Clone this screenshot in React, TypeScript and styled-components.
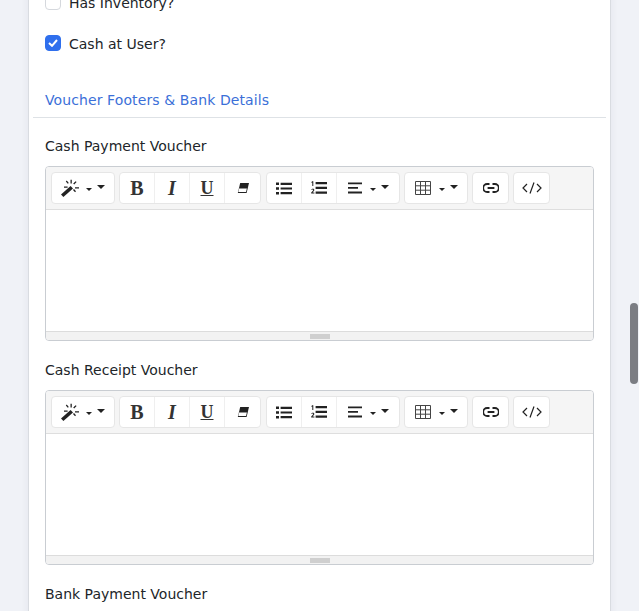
import React from "react";
import styled, { createGlobalStyle } from "styled-components";

const GlobalStyle = createGlobalStyle`
  html, body {
    margin: 0;
    padding: 0;
    height: 100%;
    overflow: hidden;
    background: #f0f2f7;
  }
  body {
    font-family: "DejaVu Sans", "Noto Sans", sans-serif;
    color: #212529;
  }
`;

const Page = styled.div`
  position: relative;
  width: 639px;
  height: 611px;
  overflow: hidden;
  padding-left: 28px;
  box-sizing: border-box;
`;

const Card = styled.div`
  width: 583px;
  height: 700px;
  box-sizing: border-box;
  margin-top: -10px;
  background: #fff;
  border-left: 1px solid #d9dce1;
  border-right: 1px solid #d9dce1;
  box-shadow: 0 0 8px rgba(30, 40, 70, 0.06);
  padding: 0 4px;
`;

const Fields = styled.div`
  padding: 0 12px;
`;

const CheckRow = styled.label<{ $gap?: number }>`
  display: flex;
  align-items: center;
  gap: 8px;
  height: 24px;
  margin-bottom: ${(p) => p.$gap ?? 0}px;
  font-size: 14px;
`;

const CheckText = styled.span`
  padding-top: 2px;
`;

const Box = styled.span<{ $checked?: boolean }>`
  display: flex;
  align-items: center;
  justify-content: center;
  box-sizing: border-box;
  width: 16px;
  height: 16px;
  border-radius: 4px;
  border: 1px solid ${(p) => (p.$checked ? "#2f6fed" : "#d5d8dd")};
  background: ${(p) => (p.$checked ? "#2f6fed" : "#fff")};
`;

const SectionTitle = styled.div`
  color: #3b6fd8;
  font-size: 14px;
  line-height: 20px;
  letter-spacing: 0.1px;
  padding: 35px 12px 7px;
  border-bottom: 1px solid #dee2e6;
`;

const FieldLabel = styled.div`
  font-size: 14px;
  line-height: 20px;
  margin-top: 19px;
  margin-bottom: 10px;

  &:first-child {
    margin-top: 18px;
  }
`;

const Editor = styled.div`
  box-sizing: border-box;
  width: 549px;
  height: 175px;
  border: 1px solid #c9cdd2;
  border-radius: 4px;
  display: flex;
  flex-direction: column;
  overflow: hidden;
`;

const Toolbar = styled.div`
  display: flex;
  flex: none;
  align-items: flex-start;
  height: 43px;
  box-sizing: border-box;
  padding: 5px 0 0 5px;
  gap: 4px;
  background: #f5f5f5;
  border-bottom: 1px solid #dedede;
`;

const ButtonGroup = styled.div<{ $after?: number }>`
  display: flex;
  height: 32px;
  box-sizing: border-box;
  margin-right: ${(p) => p.$after ?? 0}px;
  background: #fff;
  border: 1px solid #e6e6e6;
  border-radius: 4px;
`;

const ToolButton = styled.button<{ $width: number; $gap?: number }>`
  display: flex;
  align-items: center;
  justify-content: center;
  gap: ${(p) => p.$gap ?? 6}px;
  width: ${(p) => p.$width}px;
  padding: 0;
  margin: 0;
  background: transparent;
  border: none;
  border-right: 1px solid #efefef;
  color: #222;
  &:last-child {
    border-right: none;
  }
`;

const Letter = styled.span<{ $italic?: boolean; $underline?: boolean; $size: number }>`
  font-family: "Liberation Serif", serif;
  font-size: ${(p) => p.$size}px;
  line-height: 1;
  font-weight: 700;
  font-style: ${(p) => (p.$italic ? "italic" : "normal")};
  text-decoration: ${(p) => (p.$underline ? "underline" : "none")};
  color: #333;
`;

const Caret = styled.span<{ $small?: boolean }>`
  width: 0;
  height: 0;
  border-left: ${(p) => (p.$small ? 3.5 : 4)}px solid transparent;
  border-right: ${(p) => (p.$small ? 3.5 : 4)}px solid transparent;
  border-top: ${(p) => (p.$small ? 3 : 4)}px solid #222;
  margin-top: ${(p) => (p.$small ? 2 : -2)}px;
`;

const Carets = styled.span`
  display: flex;
  align-items: center;
  gap: 5px;
`;

const Editable = styled.div`
  flex: 1;
  background: #fff;
`;

const StatusBar = styled.div`
  flex: none;
  height: 9px;
  box-sizing: border-box;
  display: flex;
  align-items: center;
  justify-content: center;
  background: #f2f2f2;
  border-top: 1px solid #dcdcdc;
`;

const Grip = styled.span`
  width: 20px;
  height: 5px;
  background: #cfcfcf;
`;

const ScrollThumb = styled.div`
  position: absolute;
  left: 630px;
  top: 303px;
  width: 8px;
  height: 81px;
  border-radius: 4px;
  background: #7b7d83;
`;

const WandIcon = () => (
  <svg width="19" height="18" viewBox="0 0 19 18" fill="#222">
    <path d="M0 15.6 9.6 7l2.4 2.4-9.6 8.6z" />
    <path d="M9.5 .8h1.3v3.6H9.5zM14.6 2.2l1 .9-2.4 2.4-1-.9zM14 8.2h4v1.2h-4zM12 11l1-.9 2 2.2-1 .9zM4.8 2.4l1-.8 2 2.4-1 .8zM3 7.5h3.6v1.2H3z" />
  </svg>
);

const EraserIcon = () => (
  <svg width="12" height="12" viewBox="0 0 12 12">
    <path d="M3.2 1H12L9.6 11H.8z" fill="#222" />
    <path d="M2 6.5H9.9L9 10H1.3z" fill="#fff" />
  </svg>
);

const BulletIcon = () => (
  <svg width="16" height="13" viewBox="0 0 16 13" fill="#222">
    <path d="M0 .5h3v2.6H0zM0 5.2h3v2.6H0zM0 9.9h3v2.6H0zM4.6 .7H16v2.2H4.6zM4.6 5.4H16v2.2H4.6zM4.6 10.1H16v2.2H4.6z" />
  </svg>
);

const NumberedIcon = () => (
  <svg width="16" height="14" viewBox="0 0 16 14" fill="#222">
    <path d="M1.2 .3h1.1v4.6h-1V1.5l-.8.4V1zM.3 8.4c.6-.5 1.2-.6 1.7-.6.9 0 1.3.5 1.3 1.2 0 1-1.1 1.7-1.8 2.5h1.9v.9H.2v-.8c1-1.1 2-1.9 2-2.5 0-.4-.3-.5-.5-.5-.4 0-.8.2-1.2.5z" />
    <path d="M4.6 1H16v2.2H4.6zM4.6 5.8H16V8H4.6zM4.6 10.6H16v2.2H4.6z" />
  </svg>
);

const AlignIcon = () => (
  <svg width="14" height="12" viewBox="0 0 14 12" fill="#222">
    <path d="M0 .5h14v1.8H0zM0 5h10v1.8H0zM0 9.6h14v1.8H0z" />
  </svg>
);

const TableIcon = () => (
  <svg width="16" height="14" viewBox="0 0 16 14" fill="none" stroke="#444" strokeWidth="1">
    <path d="M.5.5h15v13H.5zM.5 4.8h15M.5 9.2h15M5.5.5v13M10.5.5v13" />
  </svg>
);

const LinkIcon = () => (
  <svg width="16" height="10" viewBox="0 0 16 10" fill="none" stroke="#222" strokeWidth="1.8">
    <path d="M6.5 1H4.2a3.9 3.9 0 0 0 0 8h2.3M9.5 1h2.3a3.9 3.9 0 0 1 0 8H9.5M4.6 5h6.8" />
  </svg>
);

const CodeIcon = () => (
  <svg width="20" height="12" viewBox="0 0 20 12" fill="none" stroke="#222" strokeWidth="1.2">
    <path d="M5 2 1 6l4 4M15 2l4 4-4 4M12 .5 8 11.5" />
  </svg>
);

const RichEditor = () => (
  <Editor>
    <Toolbar>
      <ButtonGroup>
        <ToolButton $width={62}>
          <WandIcon />
          <Carets>
            <Caret $small />
            <Caret />
          </Carets>
        </ToolButton>
      </ButtonGroup>
      <ButtonGroup $after={1}>
        <ToolButton $width={35}><Letter $size={20}>B</Letter></ToolButton>
        <ToolButton $width={35}><Letter $size={20} $italic>I</Letter></ToolButton>
        <ToolButton $width={35}><Letter $size={18} $underline>U</Letter></ToolButton>
        <ToolButton $width={35}><EraserIcon /></ToolButton>
      </ButtonGroup>
      <ButtonGroup>
        <ToolButton $width={35}><BulletIcon /></ToolButton>
        <ToolButton $width={35}><NumberedIcon /></ToolButton>
        <ToolButton $width={62} $gap={8}>
          <AlignIcon />
          <Carets>
            <Caret $small />
            <Caret />
          </Carets>
        </ToolButton>
      </ButtonGroup>
      <ButtonGroup>
        <ToolButton $width={62} $gap={8}>
          <TableIcon />
          <Carets>
            <Caret $small />
            <Caret />
          </Carets>
        </ToolButton>
      </ButtonGroup>
      <ButtonGroup>
        <ToolButton $width={35}><LinkIcon /></ToolButton>
      </ButtonGroup>
      <ButtonGroup>
        <ToolButton $width={35}><CodeIcon /></ToolButton>
      </ButtonGroup>
    </Toolbar>
    <Editable />
    <StatusBar>
      <Grip />
    </StatusBar>
  </Editor>
);

const App: React.FC = () => (
  <Page>
    <GlobalStyle />
    <Card>
      <Fields>
        <CheckRow $gap={17}>
          <Box />
          <CheckText>Has Inventory?</CheckText>
        </CheckRow>
        <CheckRow>
          <Box $checked>
            <svg width="10" height="8" viewBox="0 0 10 8" fill="none" stroke="#fff" strokeWidth="2">
              <path d="M1 4l3 2.8L9 1" />
            </svg>
          </Box>
          <CheckText>Cash at User?</CheckText>
        </CheckRow>
      </Fields>
      <SectionTitle>Voucher Footers &amp; Bank Details</SectionTitle>
      <Fields>
        <FieldLabel>Cash Payment Voucher</FieldLabel>
        <RichEditor />
        <FieldLabel>Cash Receipt Voucher</FieldLabel>
        <RichEditor />
        <FieldLabel>Bank Payment Voucher</FieldLabel>
      </Fields>
    </Card>
    <ScrollThumb />
  </Page>
);

export default App;
